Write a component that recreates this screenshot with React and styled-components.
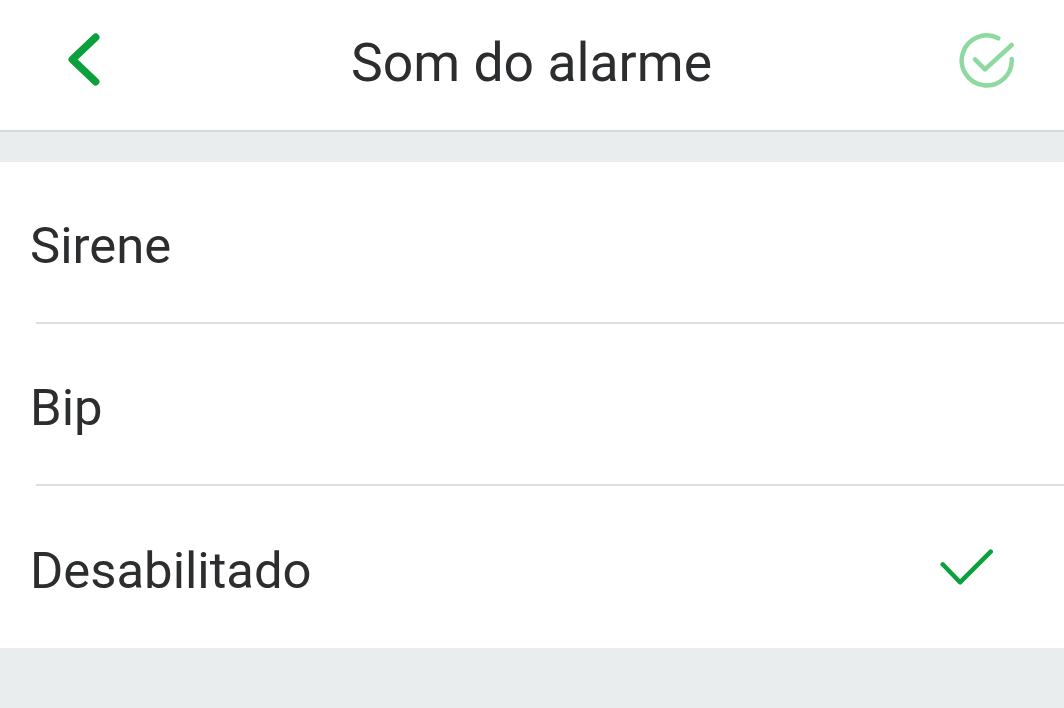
import React from "react";
import styled, { createGlobalStyle } from "styled-components";

const GlobalStyle = createGlobalStyle`
  html, body {
    margin: 0;
    padding: 0;
    background: #e9edee;
  }
  body {
    font-family: Roboto, "Liberation Sans", sans-serif;
  }
`;

const Page = styled.div`
  width: 1064px;
  height: 708px;
  overflow: hidden;
  background: #e9edee;
`;

const Header = styled.header`
  display: flex;
  align-items: center;
  justify-content: space-between;
  box-sizing: border-box;
  height: 132px;
  padding: 0 47px 10px 66px;
  background: #fff;
  border-bottom: 2px solid #d6d8d9;
`;

const Title = styled.h1`
  margin: 4px 0 0;
  font-size: 53.5px;
  font-weight: 400;
  color: #2b2d2e;
`;

const List = styled.ul`
  list-style: none;
  margin: 30px 0 0;
  padding: 0;
  background: #fff;
`;

const Row = styled.li`
  display: flex;
  align-items: center;
  justify-content: space-between;
  box-sizing: border-box;
  height: 162px;
  margin-left: 36px;
  padding-right: 70px;
  border-bottom: ${(p) => (p.$last ? "none" : "2px solid #dcdedf")};
`;

const Label = styled.span`
  margin: 6px 0 0 -6px;
  font-size: 50.8px;
  color: #2b2d2e;
`;

const Back = () => (
  <svg width="40" height="60" viewBox="0 0 40 60" fill="none">
    <path d="M29.7 7.3 L6.3 29.5 L29.7 51.7" stroke="#0aa03c" strokeWidth="7.5" strokeLinecap="round" strokeLinejoin="round" />
  </svg>
);

const Confirm = () => (
  <svg width="60" height="60" viewBox="0 0 60 60" fill="none" stroke="#8dd9a0" strokeWidth="4.5" strokeLinecap="round" strokeLinejoin="round">
    <path d="M41.3 8.3 A25 25 0 1 0 54.7 29" />
    <path d="M18 29.3 L28 39.3 L54.7 15" />
  </svg>
);

const Tick = () => (
  <svg width="54" height="38" viewBox="0 0 54 38" fill="none">
    <path d="M2.7 16.3 L20 34.3 L50.7 3.7" stroke="#0aa03c" strokeWidth="4.5" strokeLinecap="round" strokeLinejoin="round" />
  </svg>
);

const options = ["Sirene", "Bip", "Desabilitado"];

export default function App() {
  return (
    <Page>
      <GlobalStyle />
      <Header>
        <Back />
        <Title>Som do alarme</Title>
        <Confirm />
      </Header>
      <List>
        {options.map((name, i) => (
          <Row key={name} $last={i === options.length - 1}>
            <Label>{name}</Label>
            {i === options.length - 1 && <Tick />}
          </Row>
        ))}
      </List>
    </Page>
  );
}
